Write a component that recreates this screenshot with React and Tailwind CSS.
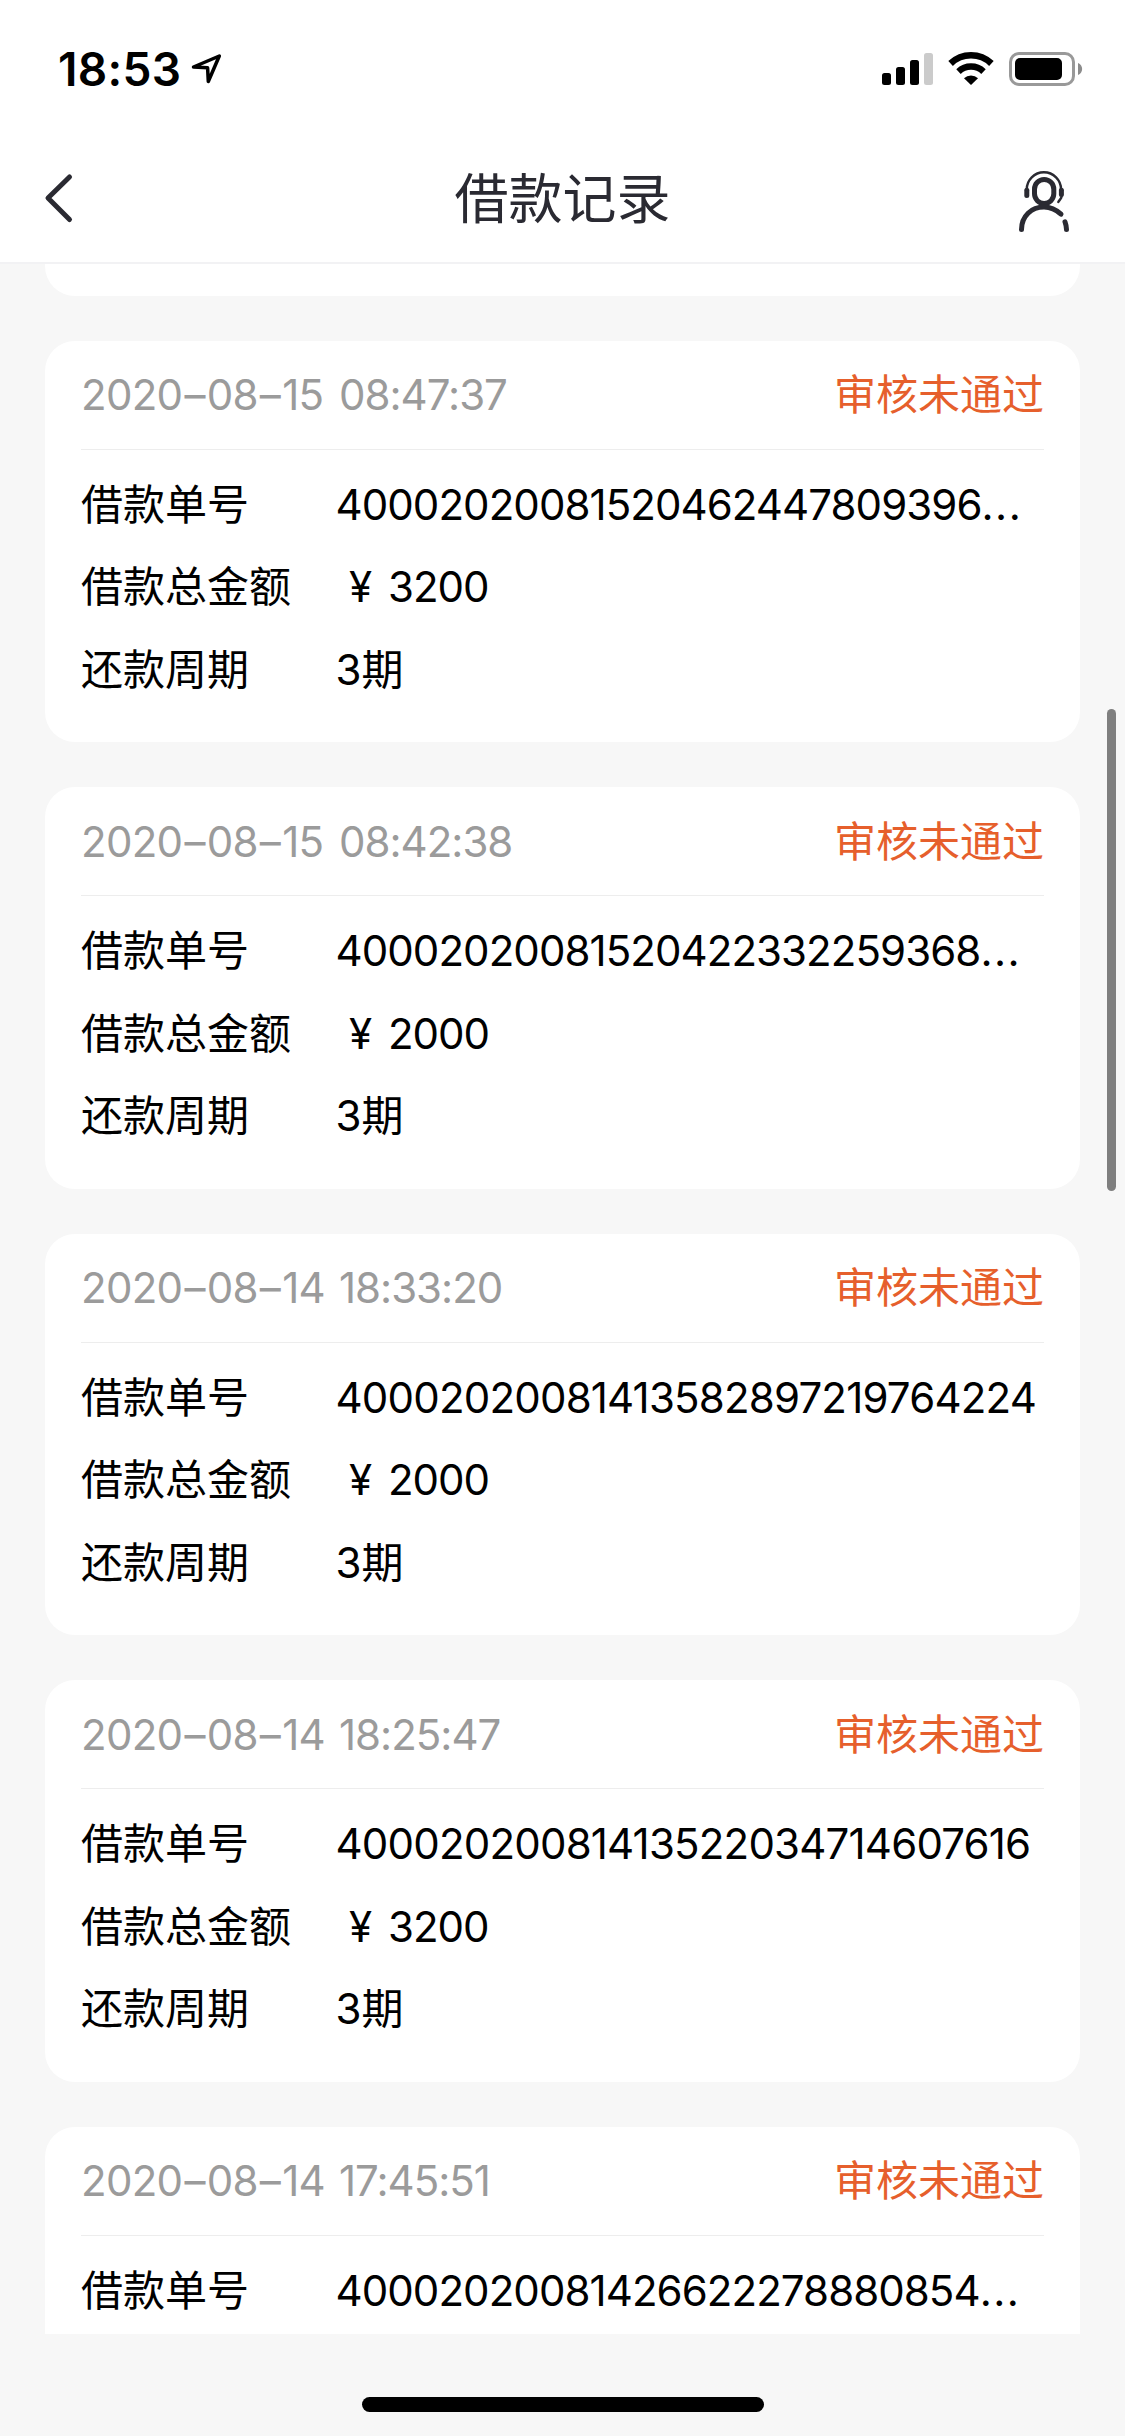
const records = [
  { date: ["2020", "08", "15"], time: "08:47:37", no: "40002020081520462447809396", truncated: true, amount: "3200" },
  { date: ["2020", "08", "15"], time: "08:42:38", no: "40002020081520422332259368", truncated: true, amount: "2000" },
  { date: ["2020", "08", "14"], time: "18:33:20", no: "40002020081413582897219764224", amount: "2000" },
  { date: ["2020", "08", "14"], time: "18:25:47", no: "40002020081413522034714607616", amount: "3200" },
];

const lastRecord = { date: ["2020", "08", "14"], time: "17:45:51", no: "40002020081426622278880854", truncated: true };

function StatusBar() {
  return (
    <div className="flex h-[138px] shrink-0 items-start justify-between pl-[58px] pr-[42px]">
      <div className="flex">
        <span className="mt-[41px] w-[133px] text-[46px] leading-[56px] font-semibold tracking-[0.3px] text-black">18:53</span>
        <svg className="mt-[53px]" width="32" height="32" viewBox="0 0 32 32" fill="none" stroke="#000" strokeWidth="3.500" strokeLinejoin="round">
          <path d="M2.500 14 L28.300 3 L17.300 28.500 L16.600 14.800 Z" />
        </svg>
      </div>
      <div className="mt-[51px] flex">
        <svg width="52" height="36" viewBox="0 0 52 36">
          <rect x="0" y="22" width="9" height="12" rx="2.5" />
          <rect x="14" y="16" width="9" height="18" rx="2.5" />
          <rect x="28" y="9" width="9" height="25" rx="2.5" />
          <rect x="42" y="2" width="9" height="32" rx="2.5" fill="#cbcbcb" />
        </svg>
        <svg className="ml-[14px]" width="46" height="36" viewBox="0 0 46 36" fill="none" stroke="#000">
          <path d="M2.6 12.5 A29.5 29.5 0 0 1 43.4 12.5" strokeWidth="6.6" />
          <path d="M10.5 20.6 A18 18 0 0 1 35.5 20.6" strokeWidth="6.4" />
          <path d="M16 27.3 A10 10 0 0 1 30 27.3 L23 34 Z" fill="#000" stroke="none" />
        </svg>
        <svg className="ml-[15px]" width="74" height="36" viewBox="0 0 74 36">
          <rect x="1.5" y="2.5" width="63" height="31" rx="8.5" fill="none" stroke="#999" strokeWidth="3" />
          <rect x="6" y="7" width="47" height="22" rx="5" />
          <path d="M69 12 C74.500 14 74.500 22 69 24 Z" fill="#8c8c8c" />
        </svg>
      </div>
    </div>
  );
}

function NavBar() {
  return (
    <div className="flex h-[126px] shrink-0 items-start justify-between border-b-2 border-[#f2f2f4] pl-[43px] pr-[54px]">
      <svg className="mt-[34px]" width="32" height="52" viewBox="0 0 32 52" fill="none" stroke="#2a2a32" strokeWidth="5" strokeLinecap="round" strokeLinejoin="round">
        <path d="M26.500 5 L5 26 L26.500 47.500" />
      </svg>
      <h1 className="mt-[22px] pl-[33px] text-[54px] leading-[80px] text-[#2a2a32]">借款记录</h1>
      <svg className="mt-[31px]" width="54" height="64" viewBox="0 0 54 64" fill="none" stroke="#2a2a32" strokeLinecap="round">
        <path d="M9.700 20.500 A17.200 17.200 0 0 1 44.100 20.500" strokeWidth="2.400" />
        <path d="M9.800 21.300 V26.500" strokeWidth="5" />
        <path d="M44.400 21.300 V25.500" strokeWidth="5" />
        <path d="M44.600 27.500 C44.300 30 42.500 30.500 41.300 33" strokeWidth="2.400" />
        <rect x="17.500" y="10.500" width="19.300" height="24" rx="9.650" strokeWidth="5" />
        <path d="M4.500 60.500 C4.500 47 14.500 38 27 38 C33.500 38 39.500 41 44 45.200" strokeWidth="5" />
        <path d="M48 52.800 C49 55.500 49.500 58 49.500 60.500" strokeWidth="5" />
      </svg>
    </div>
  );
}

function Row({ label, children }) {
  return (
    <div className="flex h-[82.5px] items-center text-[42px] text-black">
      <span className="w-[254.5px] shrink-0">{label}</span>
      <span className="whitespace-nowrap">{children}</span>
    </div>
  );
}

function CardHeader({ record }) {
  const [year, month, day] = record.date;
  return (
    <div className="flex h-[109px] items-center justify-between border-b border-[#ededed] text-[42px]">
      <span className="flex whitespace-nowrap text-[#9b9b9b]">
        <span className="w-[258px] tracking-[-0.7px]">
          {year}
          <span className="px-[2px]">–</span>
          {month}
          <span className="px-[2px]">–</span>
          {day}{" "}
        </span>
        <span className="tracking-[-1px]">{record.time}</span>
      </span>
      <span className="text-[#e65f2c]">审核未通过</span>
    </div>
  );
}

function OrderNumber({ record }) {
  return (
    <Row label="借款单号">
      <span className={record.truncated ? "tracking-[-0.93px]" : "tracking-[-0.8px]"}>{record.no}</span>
      {record.truncated && <span className="tracking-[1.5px]">...</span>}
    </Row>
  );
}

function RecordCard({ record }) {
  return (
    <section className="h-[401.5px] shrink-0 rounded-[30px] bg-white px-9">
      <CardHeader record={record} />
      <div className="pt-[13px]">
        <OrderNumber record={record} />
        <Row label="借款总金额">
          <span className="inline-block w-[52.5px] pl-[13.5px]">¥</span>
          <span className="tracking-[-1px]">{record.amount}</span>
        </Row>
        <Row label="还款周期">3期</Row>
      </div>
    </section>
  );
}

export default function App() {
  return (
    <div className="relative flex h-[2436px] w-[1125px] flex-col overflow-hidden bg-[#f7f7f7] font-['Inter','Noto_Sans_CJK_SC',sans-serif]">
      <header className="flex shrink-0 flex-col bg-white">
        <StatusBar />
        <NavBar />
      </header>
      <main className="flex h-[2070px] shrink-0 flex-col gap-[45px] px-[45px]">
        <div className="h-[31.75px] shrink-0 rounded-b-[30px] bg-white" />
        {records.map((r) => (
          <RecordCard key={r.time} record={r} />
        ))}
        <section className="flex-1 rounded-t-[30px] bg-white px-9">
          <CardHeader record={lastRecord} />
          <div className="pt-[13px]">
            <OrderNumber record={lastRecord} />
          </div>
        </section>
      </main>
      <footer className="flex flex-1 items-start justify-center pt-[63px]">
        <div className="h-[15px] w-[402px] rounded-full bg-black" />
      </footer>
      <div className="absolute top-[709px] right-[9px] h-[482px] w-[9px] rounded-full bg-[#7f7f7f]" />
    </div>
  );
}
